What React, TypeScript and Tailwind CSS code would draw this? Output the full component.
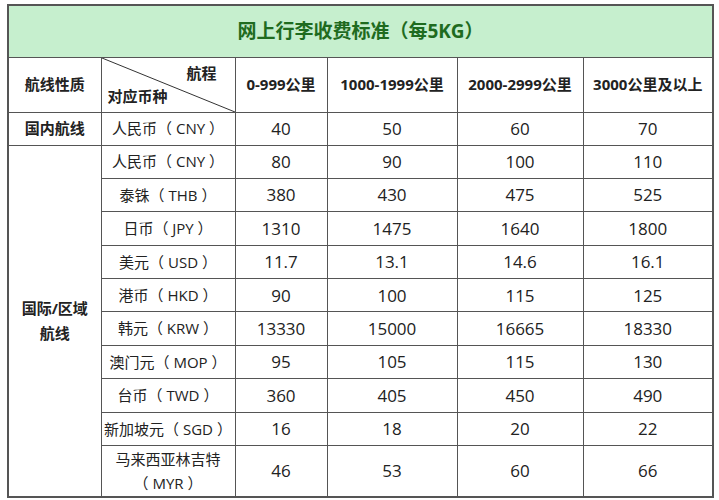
const rows: [string, string, string, string, string][] = [
  ['人民币（ CNY ）', '80', '90', '100', '110'],
  ['泰铢（ THB ）', '380', '430', '475', '525'],
  ['日币（ JPY ）', '1310', '1475', '1640', '1800'],
  ['美元（ USD ）', '11.7', '13.1', '14.6', '16.1'],
  ['港币（ HKD ）', '90', '100', '115', '125'],
  ['韩元（ KRW ）', '13330', '15000', '16665', '18330'],
  ['澳门元（ MOP ）', '95', '105', '115', '130'],
  ['台币（ TWD ）', '360', '405', '450', '490'],
  ['新加坡元（ SGD ）', '16', '18', '20', '22'],
];

const cell = 'border border-[#555] text-center align-middle p-0';
const num = `${cell} text-[17px]`;

export default function App() {
  return (
    <div
      className="w-[719px] h-[500px] bg-white pt-[4px] pl-[7px] text-[#222] text-[15px]"
      style={{ fontFamily: '"Open Sans", "Noto Sans CJK SC", sans-serif' }}
    >
      <table className="border-collapse border-2 border-[#555] table-fixed w-[705px]">
        <colgroup>
          <col className="w-[93px]" />
          <col className="w-[134px]" />
          <col className="w-[92px]" />
          <col className="w-[130px]" />
          <col className="w-[126px]" />
          <col className="w-[130px]" />
        </colgroup>
        <tbody>
          <tr className="h-[52px]">
            <td colSpan={6} className={`${cell} bg-[#c6efce] text-[#1f6b1f] text-[19px] font-bold`}>
              网上行李收费标准（每5KG）
            </td>
          </tr>
          <tr className="h-[55px] font-bold">
            <td className={cell}>航线性质</td>
            <td className={`${cell} relative`}>
              <svg className="absolute inset-0 w-full h-full" preserveAspectRatio="none" viewBox="0 0 100 100">
                <line x1="0" y1="0" x2="100" y2="100" stroke="#333" strokeWidth="1" vectorEffect="non-scaling-stroke" />
              </svg>
              <div className="relative h-[54px] flex flex-col justify-between px-[6px] py-[4px]">
                <span className="self-end pr-[12px]">航程</span>
                <span className="self-start">对应币种</span>
              </div>
            </td>
            <td className={cell}>0-999公里</td>
            <td className={cell}>1000-1999公里</td>
            <td className={cell}>2000-2999公里</td>
            <td className={cell}>3000公里及以上</td>
          </tr>
          <tr className="h-[33px]">
            <td className={`${cell} font-bold`}>国内航线</td>
            <td className={cell}>人民币（ CNY ）</td>
            <td className={num}>40</td>
            <td className={num}>50</td>
            <td className={num}>60</td>
            <td className={num}>70</td>
          </tr>
          {rows.map((r, i) => (
            <tr key={r[0]} className="h-[33.4px]">
              {i === 0 && (
                <td rowSpan={10} className={`${cell} font-bold leading-[25px]`}>
                  国际/区域
                  <br />
                  航线
                </td>
              )}
              <td className={cell}>{r[0]}</td>
              {r.slice(1).map((v, j) => (
                <td key={j} className={num}>
                  {v}
                </td>
              ))}
            </tr>
          ))}
          <tr className="h-[51px]">
            <td className={`${cell} leading-[24px]`}>
              马来西亚林吉特
              <br />
              （ MYR ）
            </td>
            <td className={num}>46</td>
            <td className={num}>53</td>
            <td className={num}>60</td>
            <td className={num}>66</td>
          </tr>
        </tbody>
      </table>
    </div>
  );
}
